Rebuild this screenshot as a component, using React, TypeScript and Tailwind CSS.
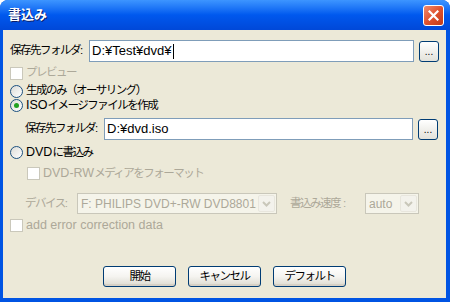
import React from 'react';

const jp = { fontFamily: '"Liberation Sans", "Noto Sans CJK JP", sans-serif' };

// japanese glyphs are narrower in the original (MS UI Gothic), latin runs are Tahoma-sized
const JP = 'text-[11.5px] tracking-[-1.5px]';
const EN = 'text-[12.5px] tracking-normal';

function Radio({ checked, children }: { checked?: boolean; children: React.ReactNode }) {
  return (
    <div className="flex h-[14px] items-center">
      <span className="ml-[7px] flex h-[13px] w-[13px] shrink-0 items-center justify-center rounded-full border border-[#1C5180] bg-gradient-to-br from-[#DCDCD7] to-white">
        {checked ? <span className="h-[5px] w-[5px] rounded-full bg-[#21A121]" /> : null}
      </span>
      <span className={`ml-[3px] whitespace-nowrap text-black ${JP}`}>{children}</span>
    </div>
  );
}

function DisabledCheck({ children, indent }: { children: React.ReactNode; indent?: boolean }) {
  return (
    <div className={`flex h-[14px] items-center ${indent ? 'pl-[24px]' : 'pl-[7px]'}`}>
      <span className="h-[13px] w-[13px] shrink-0 border border-[#CAC8BB] bg-white" />
      <span className={`ml-[3px] whitespace-nowrap text-[#ACA899] ${JP}`}>{children}</span>
    </div>
  );
}

function BrowseButton() {
  return (
    <button
      type="button"
      className="ml-[5px] flex h-[21px] w-[20px] shrink-0 items-end justify-center rounded-[3px] border border-[#003C74] bg-gradient-to-b from-white to-[#E3E2DA] pb-[4px] text-[10px] leading-none text-black"
    >
      ...
    </button>
  );
}

function FolderRow({ indent, value, caret }: { indent?: boolean; value: string; caret?: boolean }) {
  return (
    <div className={`flex h-[22px] items-center ${indent ? 'pl-[22px]' : 'pl-[7px]'}`}>
      <span className={`w-[79px] shrink-0 whitespace-nowrap text-black ${JP}`}>保存先フォルダ:</span>
      <div
        className={`flex h-[22px] ${indent ? 'w-[309px]' : 'w-[325px]'} shrink-0 items-center border border-[#7F9DB9] bg-white pl-[2px] text-[13px] text-black`}
      >
        {value}
        {caret ? <span className="ml-[1px] h-[15px] w-[1px] bg-black" /> : null}
      </div>
      <BrowseButton />
    </div>
  );
}

function DisabledSelect({ value, width }: { value: string; width: string }) {
  return (
    <div className={`flex h-[21px] ${width} shrink-0 items-center overflow-hidden border border-[#C9C7BA] bg-[#F5F4EA]`}>
      <span className="flex-1 whitespace-nowrap pl-[3px] text-[12px] text-[#ACA899]">{value}</span>
      <span className="mr-[1px] flex h-[17px] w-[17px] shrink-0 items-center justify-center rounded-[2px] border border-[#E8E6DD] bg-[#F3F2EC]">
        <svg width="9" height="6" viewBox="0 0 9 6">
          <path d="M1 1 L4.5 4.5 L8 1" stroke="#C9C7BA" strokeWidth="2" fill="none" />
        </svg>
      </span>
    </div>
  );
}

function DialogButton({ label }: { label: string }) {
  return (
    <button
      type="button"
      className={`flex h-[21px] w-[73px] items-center justify-center rounded-[3px] border border-[#003C74] bg-gradient-to-b from-white via-[#F5F4F0] to-[#DCDAD0] text-black shadow-[inset_0_-2px_0_#D6D0C5] ${JP}`}
    >
      {label}
    </button>
  );
}

export default function App() {
  return (
    <div className="flex h-[302px] w-[450px] flex-col overflow-hidden rounded-t-[8px] bg-[#0054E3]" style={jp}>
      <div className="flex h-[30px] items-center justify-between bg-gradient-to-b from-[#3D95FF] via-[#0058EE] to-[#0048D8] pl-[8px] pr-[6px]">
        <span className="text-[13px] font-bold text-white [text-shadow:1px_1px_0_#0A1E6A]">書込み</span>
        <span className="flex h-[21px] w-[21px] items-center justify-center rounded-[3px] border border-white bg-gradient-to-br from-[#F08A6C] via-[#E0522F] to-[#C13A16]">
          <svg width="11" height="11" viewBox="0 0 11 11">
            <path d="M1.5 1.5 L9.5 9.5 M9.5 1.5 L1.5 9.5" stroke="white" strokeWidth="2.2" strokeLinecap="square" />
          </svg>
        </span>
      </div>
      <div className="mb-[4px] ml-[3px] mr-[4px] flex flex-1 flex-col bg-[#ECE9D8]">
        <div className="mt-[10px]">
          <FolderRow value="D:¥Test¥dvd¥" caret />
        </div>
        <div className="mt-[4px]">
          <DisabledCheck>プレビュー</DisabledCheck>
        </div>
        <div className="mt-[4px]">
          <Radio>生成のみ（オーサリング）</Radio>
        </div>
        <Radio checked>
          <span className={EN}>ISO</span>イメージファイルを作成
        </Radio>
        <div className="mt-[6px]">
          <FolderRow indent value="D:¥dvd.iso" />
        </div>
        <div className="mt-[5px]">
          <Radio>
            <span className={EN}>DVD</span>に書込み
          </Radio>
        </div>
        <div className="mt-[7px]">
          <DisabledCheck indent>
            <span className={EN}>DVD-RW</span>メディアをフォーマット
          </DisabledCheck>
        </div>
        <div className="mt-[13px] flex h-[21px] items-center pl-[22px]">
          <span className={`w-[52px] shrink-0 whitespace-nowrap text-[#ACA899] ${JP}`}>デバイス:</span>
          <DisabledSelect value="F: PHILIPS DVD+-RW DVD8801" width="w-[200px]" />
          <span className={`ml-[13px] w-[75px] shrink-0 whitespace-nowrap text-[#ACA899] ${JP}`}>
            書込み速度<span className="ml-[3px]">:</span>
          </span>
          <DisabledSelect value="auto" width="w-[54px]" />
        </div>
        <div className="mt-[4px]">
          <DisabledCheck>
            <span className={EN}>add error correction data</span>
          </DisabledCheck>
        </div>
        <div className="mt-[34px] flex gap-[12px] pl-[100px]">
          <DialogButton label="開始" />
          <DialogButton label="キャンセル" />
          <DialogButton label="デフォルト" />
        </div>
      </div>
    </div>
  );
}
